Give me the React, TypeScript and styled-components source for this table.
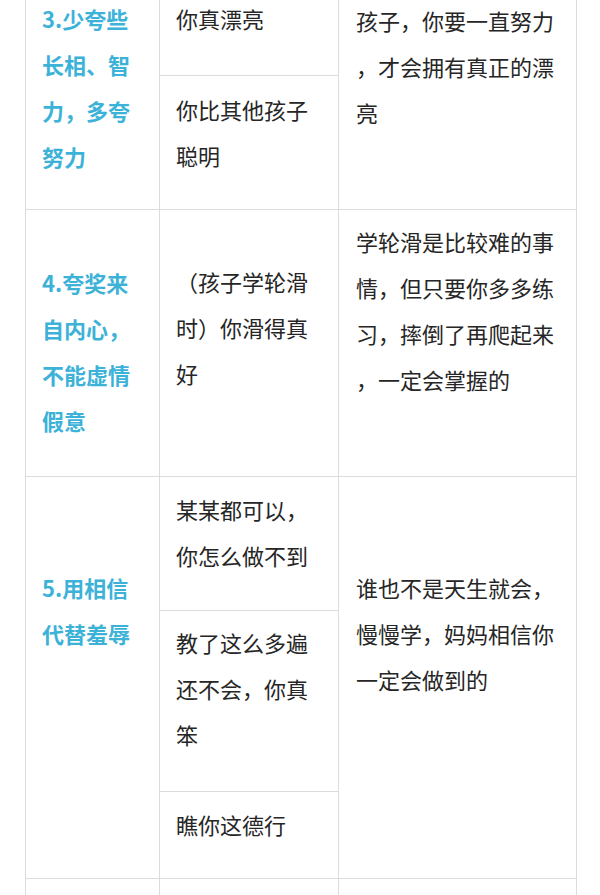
import styled, { createGlobalStyle } from "styled-components"

const GlobalStyle = createGlobalStyle`
	html, body {
		margin: 0;
		padding: 0;
		background: #ffffff;
		overflow: hidden;
	}
	body {
		font-family: "Noto Sans CJK SC", "Noto Sans", sans-serif;
	}
`

const Page = styled.div`
	width: 600px;
	height: 895px;
	overflow: hidden;
	background: #ffffff;
`

const Table = styled.div`
	margin: -14px 0 0 25px;
	width: 551px;
	border-left: 1px solid #dcdcdc;
	border-top: 1px solid #dcdcdc;
`

const Row = styled.div<{ $h: number }>`
	display: grid;
	grid-template-columns: 134px 179px 238px;
	height: ${({ $h }) => $h}px;
`

const Cell = styled.div<{ $pt: number, $pl?: number }>`
	box-sizing: border-box;
	border-right: 1px solid #dcdcdc;
	border-bottom: 1px solid #dcdcdc;
	padding: ${({ $pt, $pl }) => `${$pt}px 0 0 ${$pl ?? 16}px`};
	font-size: 22px;
	line-height: 46px;
	color: #262626;
`

const TitleCell = styled(Cell)`
	color: #3cb2d8;
	font-weight: 700;
`

const Stack = styled.div`
	display: flex;
	flex-direction: column;
`

const SubCell = styled(Cell)<{ $h: number }>`
	height: ${({ $h }) => $h}px;
`

const LastSubCell = styled(SubCell)`
	flex: 1;
`

const Line = styled.div`
	white-space: nowrap;
`

function Lines({ items }: { items: string[] }) {
	return (<>
		{items.map((t, i) => <Line key={i}>{t}</Line>)}
	</>)
}

export default function App() {
	return (
		<Page>
			<GlobalStyle />
			<Table>
				<Row $h={223}>
					<TitleCell $pt={8}>
						<Lines items={["3.少夸些", "长相、智", "力，多夸", "努力"]} />
					</TitleCell>
					<Stack>
						<SubCell $h={89} $pt={8}>
							<Lines items={["你真漂亮"]} />
						</SubCell>
						<LastSubCell $h={134} $pt={10}>
							<Lines items={["你比其他孩子", "聪明"]} />
						</LastSubCell>
					</Stack>
					<Cell $pt={10} $pl={17}>
						<Lines items={["孩子，你要一直努力", "，才会拥有真正的漂", "亮"]} />
					</Cell>
				</Row>
				<Row $h={267}>
					<TitleCell $pt={49}>
						<Lines items={["4.夸奖来", "自内心，", "不能虚情", "假意"]} />
					</TitleCell>
					<Cell $pt={48}>
						<Lines items={["（孩子学轮滑", "时）你滑得真", "好"]} />
					</Cell>
					<Cell $pt={8} $pl={17}>
						<Lines items={["学轮滑是比较难的事", "情，但只要你多多练", "习，摔倒了再爬起来", "，一定会掌握的"]} />
					</Cell>
				</Row>
				<Row $h={402}>
					<TitleCell $pt={87}>
						<Lines items={["5.用相信", "代替羞辱"]} />
					</TitleCell>
					<Stack>
						<SubCell $h={134} $pt={9}>
							<Lines items={["某某都可以，", "你怎么做不到"]} />
						</SubCell>
						<SubCell $h={181} $pt={8}>
							<Lines items={["教了这么多遍", "还不会，你真", "笨"]} />
						</SubCell>
						<LastSubCell $h={87} $pt={9}>
							<Lines items={["瞧你这德行"]} />
						</LastSubCell>
					</Stack>
					<Cell $pt={87} $pl={17}>
						<Lines items={["谁也不是天生就会，", "慢慢学，妈妈相信你", "一定会做到的"]} />
					</Cell>
				</Row>
				<Row $h={100}>
					<TitleCell $pt={10} />
					<Cell $pt={10} />
					<Cell $pt={10} />
				</Row>
			</Table>
		</Page>
	)
}
